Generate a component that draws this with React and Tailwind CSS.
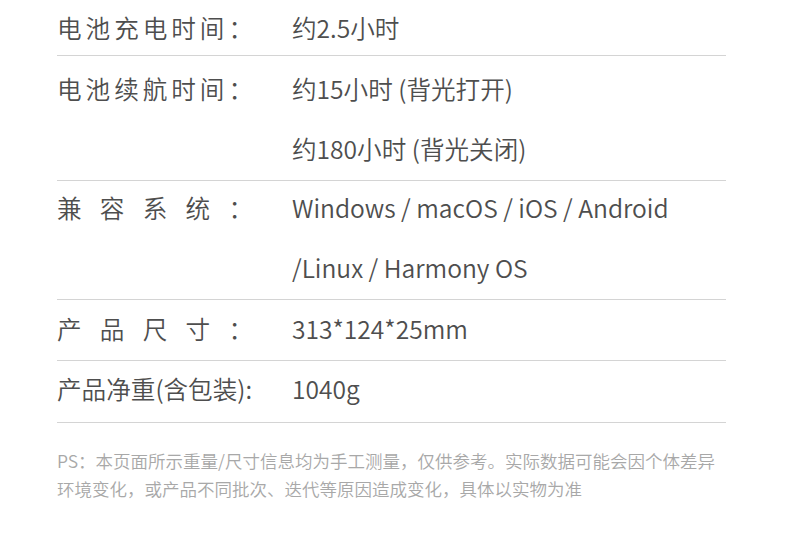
export default function App() {
  const Label = ({ children }) => (
    <div className="w-[196px] shrink-0 [text-align:justify] [text-align-last:justify]">{children}</div>
  );
  return (
    <div
      className="w-[790px] h-[560px] bg-white text-[#4e4e4e] text-[24.6px] leading-[60px] font-[350] overflow-hidden"
      style={{ fontFamily: '"Noto Sans CJK SC", "Noto Sans", sans-serif' }}
    >
      <div className="ml-[57px] w-[669px] -mt-[3px]">
        <div className="flex border-b border-[#d4d4d4] h-[59px]">
          <Label>电池充电时间：</Label>
          <div className="ml-[39px]">约2.5小时</div>
        </div>
        <div className="flex border-b border-[#d4d4d4] h-[125px] pt-[2px]">
          <Label>电池续航时间：</Label>
          <div className="ml-[39px]">
            <div>约15小时 (背光打开)</div>
            <div>约180小时 (背光关闭)</div>
          </div>
        </div>
        <div className="flex border-b border-[#d4d4d4] h-[119px]">
          <div className="flex -mt-[4px]">
            <Label>兼容系统：</Label>
            <div className="ml-[39px]">
              <div>Windows / macOS / iOS / Android</div>
              <div>/Linux / Harmony OS</div>
            </div>
          </div>
        </div>
        <div className="flex border-b border-[#d4d4d4] h-[61px]">
          <div className="flex -mt-[2px]">
            <Label>产品尺寸：</Label>
            <div className="ml-[39px]">313*124*25mm</div>
          </div>
        </div>
        <div className="flex border-b border-[#d4d4d4] h-[62px]">
          <div className="flex -mt-[3px]">
            <div className="w-[196px] shrink-0 whitespace-nowrap">产品净重(含包装):</div>
            <div className="ml-[39px]">1040g</div>
          </div>
        </div>
      </div>
      <div className="ml-[57px] mt-[24px] w-[680px] text-[17.5px] leading-[28px] text-[#a8a8a8]">
        <div>PS：本页面所示重量/尺寸信息均为手工测量，仅供参考。实际数据可能会因个体差异</div>
        <div>环境变化，或产品不同批次、迭代等原因造成变化，具体以实物为准</div>
      </div>
    </div>
  );
}
